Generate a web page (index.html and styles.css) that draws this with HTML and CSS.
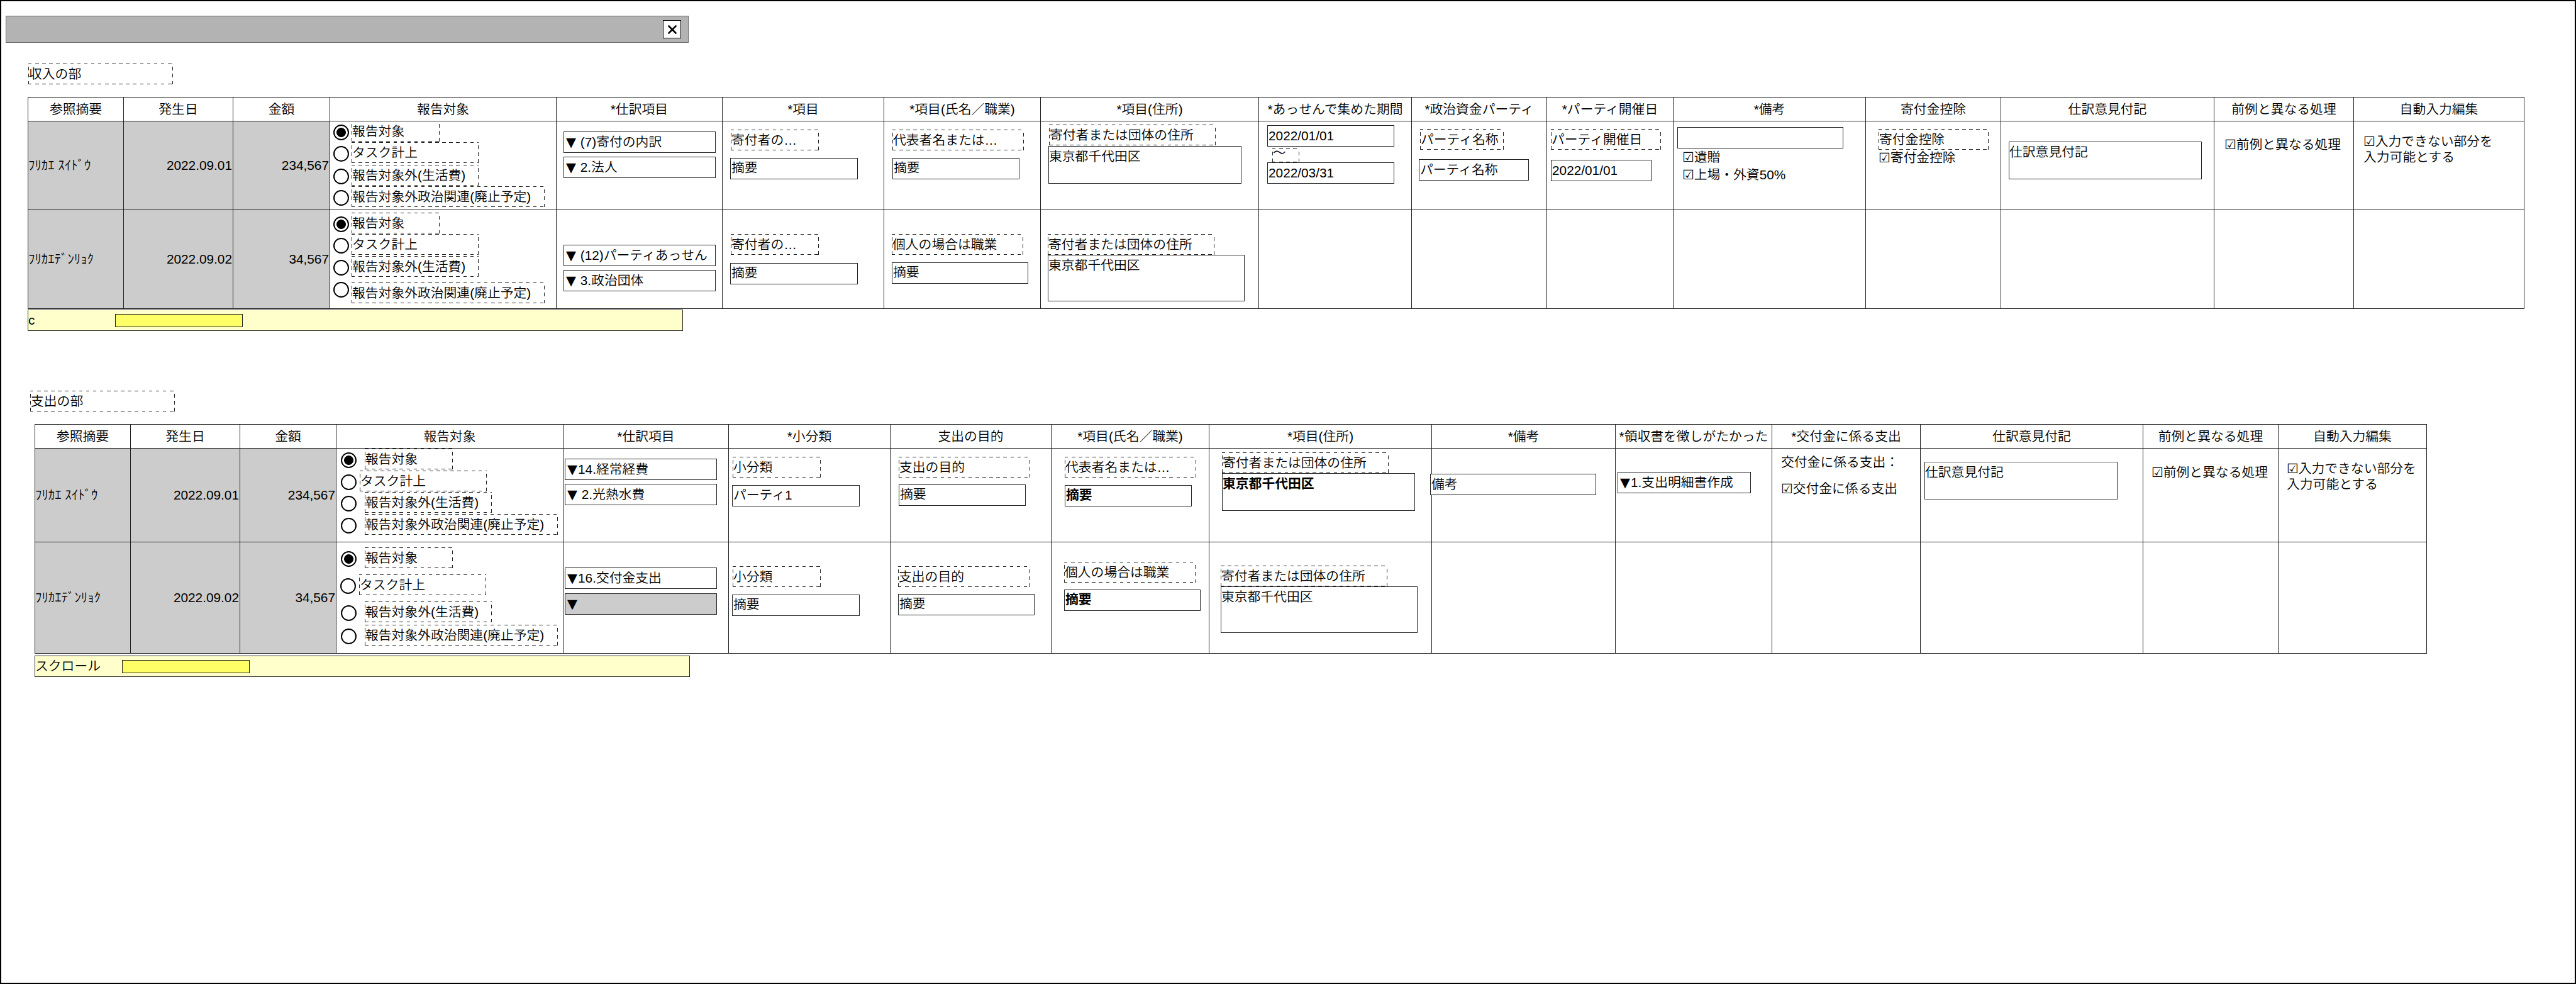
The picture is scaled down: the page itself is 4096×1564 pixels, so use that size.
FILE: index.html
```html
<!DOCTYPE html>
<html lang="ja">
<head>
<meta charset="utf-8">
<title>収支仕訳</title>
<link rel="stylesheet" href="styles.css">
</head>
<body>
<div class="window">
  <header class="titlebar">
    <button class="close" aria-label="閉じる"><svg viewBox="0 0 14 14"><path d="M1.5 1.5 12.5 12.5M12.5 1.5 1.5 12.5"/></svg></button>
  </header>

  <section class="section income">
    <h2 class="note title">収入の部</h2>
    <div class="grid">
      <div class="h">参照摘要</div><div class="h">発生日</div><div class="h">金額</div><div class="h">報告対象</div><div class="h">*仕訳項目</div><div class="h">*項目</div><div class="h">*項目(氏名／職業)</div><div class="h">*項目(住所)</div><div class="h">*あっせんで集めた期間</div><div class="h">*政治資金パーティ</div><div class="h">*パーティ開催日</div><div class="h">*備考</div><div class="h">寄付金控除</div><div class="h">仕訳意見付記</div><div class="h">前例と異なる処理</div><div class="h">自動入力編集</div>

      <div class="v">ﾌﾘｶｴ ｽｲﾄﾞｳ</div><div class="v num">2022.09.01</div><div class="v num">234,567</div>
      <div class="c options">
        <div class="option"><i class="radio on"></i><span class="note w140">報告対象</span></div>
        <div class="option"><i class="radio"></i><span class="note w202">タスク計上</span></div>
        <div class="option"><i class="radio"></i><span class="note w202">報告対象外(生活費)</span></div>
        <div class="option"><i class="radio"></i><span class="note w307">報告対象外政治関連(廃止予定)</span></div>
      </div>
      <div class="c account"><div class="box w241"><b class="sym">▼</b> (7)寄付の内訳</div><div class="box w241"><b class="sym">▼</b> 2.法人</div></div>
      <div class="c item"><div class="note w140">寄付者の…</div><div class="box up w203">摘要</div></div>
      <div class="c name"><div class="note w209">代表者名または…</div><div class="box up w202">摘要</div></div>
      <div class="c address"><div class="note w265">寄付者または団体の住所</div><div class="box area w307">東京都千代田区</div></div>
      <div class="c period"><div class="box w202">2022/01/01</div><div class="note tilde">～</div><div class="box w202">2022/03/31</div></div>
      <div class="c party"><div class="note w133">パーティ名称</div><div class="box w175">パーティ名称</div></div>
      <div class="c held"><div class="note w175">パーティ開催日</div><div class="box w160">2022/01/01</div></div>
      <div class="c remarks"><div class="box w264"></div><div class="check"><b class="sym">☑</b>遺贈</div><div class="check"><b class="sym">☑</b>上場・外資50%</div></div>
      <div class="c deduction"><div class="note w175">寄付金控除</div><div class="check"><b class="sym">☑</b>寄付金控除</div></div>
      <div class="c opinion"><div class="box area w307">仕訳意見付記</div></div>
      <div class="c precedent"><div class="check"><b class="sym">☑</b>前例と異なる処理</div></div>
      <div class="c auto"><div class="check two"><b class="sym">☑</b>入力できない部分を<br>入力可能とする</div></div>

      <div class="v">ﾌﾘｶｴﾃﾞﾝﾘｮｸ</div><div class="v num">2022.09.02</div><div class="v num">34,567</div>
      <div class="c options second">
        <div class="option"><i class="radio on"></i><span class="note w140">報告対象</span></div>
        <div class="option"><i class="radio"></i><span class="note w202">タスク計上</span></div>
        <div class="option"><i class="radio"></i><span class="note w202">報告対象外(生活費)</span></div>
        <div class="option"><i class="radio"></i><span class="note w307">報告対象外政治関連(廃止予定)</span></div>
      </div>
      <div class="c account second"><div class="box w241"><b class="sym">▼</b> (12)パーティあっせん</div><div class="box w241"><b class="sym">▼</b> 3.政治団体</div></div>
      <div class="c item second"><div class="note w140">寄付者の…</div><div class="box up w203">摘要</div></div>
      <div class="c name second"><div class="note w209">個人の場合は職業</div><div class="box up w217">摘要</div></div>
      <div class="c address second"><div class="note w265">寄付者または団体の住所</div><div class="box area tall w313">東京都千代田区</div></div>
      <div class="c"></div><div class="c"></div><div class="c"></div><div class="c"></div><div class="c"></div><div class="c"></div><div class="c"></div><div class="c"></div>
    </div>
    <div class="scroll"><span class="scroll-label">c</span><span class="thumb"></span></div>
  </section>

  <section class="section expense">
    <h2 class="note title">支出の部</h2>
    <div class="grid">
      <div class="h">参照摘要</div><div class="h">発生日</div><div class="h">金額</div><div class="h">報告対象</div><div class="h">*仕訳項目</div><div class="h">*小分類</div><div class="h">支出の目的</div><div class="h">*項目(氏名／職業)</div><div class="h">*項目(住所)</div><div class="h">*備考</div><div class="h">*領収書を徴しがたかった</div><div class="h">*交付金に係る支出</div><div class="h">仕訳意見付記</div><div class="h">前例と異なる処理</div><div class="h">自動入力編集</div>

      <div class="v">ﾌﾘｶｴ ｽｲﾄﾞｳ</div><div class="v num">2022.09.01</div><div class="v num">234,567</div>
      <div class="c options">
        <div class="option"><i class="radio on"></i><span class="note w140">報告対象</span></div>
        <div class="option near"><i class="radio"></i><span class="note w202">タスク計上</span></div>
        <div class="option"><i class="radio"></i><span class="note w202">報告対象外(生活費)</span></div>
        <div class="option"><i class="radio"></i><span class="note w307">報告対象外政治関連(廃止予定)</span></div>
      </div>
      <div class="c account"><div class="box w241"><b class="sym">▼</b>14.経常経費</div><div class="box w241"><b class="sym">▼</b> 2.光熱水費</div></div>
      <div class="c item"><div class="note w140">小分類</div><div class="box up w203">パーティ1</div></div>
      <div class="c purpose"><div class="note w209">支出の目的</div><div class="box up w202">摘要</div></div>
      <div class="c name"><div class="note w209">代表者名または…</div><div class="box up strong w202">摘要</div></div>
      <div class="c address"><div class="note w265">寄付者または団体の住所</div><div class="box area strong w307">東京都千代田区</div></div>
      <div class="c remarks"><div class="box w264">備考</div></div>
      <div class="c receipt"><div class="box w212"><b class="sym">▼</b>1.支出明細書作成</div></div>
      <div class="c grant"><div class="check">交付金に係る支出：</div><div class="check"><b class="sym">☑</b>交付金に係る支出</div></div>
      <div class="c opinion"><div class="box area w307">仕訳意見付記</div></div>
      <div class="c precedent"><div class="check"><b class="sym">☑</b>前例と異なる処理</div></div>
      <div class="c auto"><div class="check two"><b class="sym">☑</b>入力できない部分を<br>入力可能とする</div></div>

      <div class="v">ﾌﾘｶｴﾃﾞﾝﾘｮｸ</div><div class="v num">2022.09.02</div><div class="v num">34,567</div>
      <div class="c options second">
        <div class="option"><i class="radio on"></i><span class="note w140">報告対象</span></div>
        <div class="option near"><i class="radio"></i><span class="note w202">タスク計上</span></div>
        <div class="option"><i class="radio"></i><span class="note w202">報告対象外(生活費)</span></div>
        <div class="option"><i class="radio"></i><span class="note w307">報告対象外政治関連(廃止予定)</span></div>
      </div>
      <div class="c account second"><div class="box w241"><b class="sym">▼</b>16.交付金支出</div><div class="box disabled w241"><b class="sym">▼</b></div></div>
      <div class="c item second"><div class="note w140">小分類</div><div class="box up w203">摘要</div></div>
      <div class="c purpose second"><div class="note w209">支出の目的</div><div class="box up w217">摘要</div></div>
      <div class="c name second"><div class="note w209">個人の場合は職業</div><div class="box up strong w217">摘要</div></div>
      <div class="c address second"><div class="note w265">寄付者または団体の住所</div><div class="box area tall w313">東京都千代田区</div></div>
      <div class="c"></div><div class="c"></div><div class="c"></div><div class="c"></div><div class="c"></div><div class="c"></div>
    </div>
    <div class="scroll"><span class="scroll-label">スクロール</span><span class="thumb"></span></div>
  </section>
</div>
</body>
</html>
```
FILE: styles.css
```css
:root { --line: #222; }
* { box-sizing: border-box; }
body {
  margin: 0;
  background: #fff;
  color: #000;
  font: 350 20.8px/28px "Liberation Sans", "Noto Sans CJK JP", sans-serif;
}
.window {
  width: 4096px;
  height: 1564px;
  border: 2px solid #000;
  padding: 23px 0 0 7px;
  overflow: hidden;
}
.titlebar {
  width: 1086px;
  height: 43px;
  border: 1px solid #666;
  background: #b3b3b3;
  display: flex;
  justify-content: flex-end;
  align-items: center;
  padding-right: 11px;
}
.close {
  width: 29px;
  height: 29px;
  padding: 0;
  border: 1px solid #000;
  background: #fff;
  display: flex;
  align-items: center;
  justify-content: center;
}
.close svg { width: 14px; height: 14px; fill: none; stroke: #000; stroke-width: 2.6; stroke-linecap: round; }

.section { display: flex; flex-direction: column; align-items: flex-start; }
.income { padding: 33px 0 0 35px; }
.expense { padding: 95px 0 0 39px; }
.title { width: 230px; margin: 0 0 0 1px; font-size: inherit; font-weight: inherit; }
.expense .title { margin-left: 0; }

/* Dashed caption boxes */
.note {
  flex: none;
  height: 33px;
  padding-left: 1px;
  line-height: 33px;
  white-space: nowrap;
  background:
    repeating-linear-gradient(90deg, var(--line) 0 5.5px, transparent 5.5px 11.1px) 0 0 / 100% 1px no-repeat,
    repeating-linear-gradient(90deg, var(--line) 0 5.5px, transparent 5.5px 11.1px) 0 100% / 100% 1px no-repeat,
    repeating-linear-gradient(0deg, var(--line) 0 5.5px, transparent 5.5px 11.1px) 0 0 / 1px 100% no-repeat,
    repeating-linear-gradient(0deg, var(--line) 0 5.5px, transparent 5.5px 11.1px) 100% 0 / 1px 100% no-repeat;
}

/* Input boxes */
.box {
  flex: none;
  height: 34px;
  border: 1px solid var(--line);
  background: #fff;
  padding-left: 1px;
  line-height: 32px;
  white-space: pre;
}
.box.up { line-height: 29px; }
.box.area { height: 60px; line-height: 32px; padding-left: 0; }
.box.area.tall { height: 74px; }
.box.disabled { background: #ccc; }
.strong { font-weight: bold; }
.sym { font-family: "DejaVu Sans", sans-serif; font-weight: normal; line-height: 1; }
.box .sym { margin: 0 1px 0 2px; }

.w133 { width: 133px; }
.w140 { width: 140px; }
.w160 { width: 160px; }
.w175 { width: 175px; }
.w202 { width: 202px; }
.w203 { width: 203px; }
.w209 { width: 209px; }
.w212 { width: 212px; }
.w217 { width: 217px; }
.w241 { width: 242px; }
.w264 { width: 264px; }
.w265 { width: 265px; }
.w307 { width: 307px; }
.w313 { width: 313px; }

/* Journal tables */
.grid {
  display: grid;
  border: solid var(--line);
  border-width: 1px 0 0 1px;
}
.income .grid {
  margin-top: 20px;
  grid-template-columns: 152px 174px 154px 360px 264px 257px 249px 347px 243px 215px 201px 306px 215px 339px 222px 271px;
  grid-template-rows: 38px 141px 157px;
}
.expense .grid {
  margin: 20px 0 0 7px;
  grid-template-columns: 152px 174px 153px 361px 263px 257px 256px 251px 354px 292px 249px 236px 354px 215px 236px;
  grid-template-rows: 38px 149px 177px;
}
.h, .v, .c {
  min-width: 0;
  border: solid var(--line);
  border-width: 0 1px 1px 0;
  display: flex;
  white-space: nowrap;
}
.h { align-items: center; justify-content: center; }
.v { align-items: center; background: #ccc; padding-right: 1px; }
.num { justify-content: flex-end; }
.c { flex-direction: column; align-items: flex-start; }
.check { white-space: nowrap; height: 28px; line-height: 28px; }
.check.two { height: 50px; line-height: 25px; }

.option { display: flex; height: 33px; }
.radio {
  flex: none;
  width: 25px;
  height: 25px;
  margin-top: 6px;
  border: 2px solid #000;
  border-radius: 50%;
}
.radio.on { background: radial-gradient(circle, #000 7px, transparent 7.8px); }

/* Income table */
.income .options { padding-left: 5px; }
.income .option { gap: 4px; margin-top: 1px; }
.income .option:nth-child(1) { margin-top: -1px; }
.income .option:nth-child(3) { margin-top: 3px; }
.income .second .option:nth-child(1) { margin-top: 4px; }
.income .second .option:nth-child(3) { margin-top: 2px; }
.income .second .option:nth-child(4) { margin-top: 9px; }
.income .second .option:nth-child(4) .radio { margin-top: -1px; }
.income .account { padding: 16px 0 0 11px; gap: 6px; }
.income .account.second { padding-top: 55px; }
.income .item { padding: 13px 0 0 12px; gap: 12px; }
.income .item .note { margin-left: 1px; }
.income .item.second { padding-top: 38px; gap: 13px; }
.income .name { padding: 13px 0 0 13px; gap: 12px; }
.income .name.second { padding: 38px 0 0 12px; }
.income .address { padding: 5px 0 0 12px; gap: 1px; }
.income .address .note { margin-left: 1px; }
.income .address.second { padding: 38px 0 0 11px; gap: 0; }
.income .address.second .note { margin-left: 0; }
.period { padding: 6px 0 0 13px; }
.period .tilde { margin: 3px 0 0 8px; width: 43px; height: 22px; line-height: 14px; }
.party { padding: 12px 0 0 11px; gap: 15px; }
.party .note { margin-left: 2px; }
.held { padding: 12px 0 0 6px; gap: 16px; }
.income .remarks { padding: 9px 0 0 6px; }
.income .remarks .check { margin-left: 8px; }
.deduction { padding: 12px 0 0 20px; }
.deduction .check { margin-top: -1px; }
.income .opinion { padding: 32px 0 0 12px; }
.income .precedent { padding: 23px 0 0 16px; }
.income .auto { padding: 19px 0 0 15px; }

/* Expense table */
.expense .options { padding-left: 7px; }
.expense .option { gap: 13px; margin-top: 2px; }
.expense .option.near { gap: 5px; }
.expense .option:nth-child(1) { margin-top: 0; }
.expense .option:nth-child(3) { margin-top: 1px; }
.expense .second .option { margin-top: 10px; }
.expense .second .option:nth-child(1) { margin-top: 8px; }
.expense .second .option:nth-child(4) { margin-top: 4px; }
.expense .second .near { margin-left: -1px; }
.expense .account { padding: 16px 0 0 2px; gap: 6px; }
.expense .account.second { padding-top: 40px; gap: 7px; }
.expense .item { padding: 13px 0 0 5px; gap: 12px; }
.expense .item .note { margin-left: 1px; }
.expense .item.second { padding-top: 38px; }
.purpose { padding: 13px 0 0 13px; gap: 11px; }
.purpose.second { padding: 38px 0 0 12px; }
.expense .name { padding: 13px 0 0 21px; gap: 12px; }
.expense .name.second { padding: 31px 0 0 20px; gap: 11px; }
.expense .address { padding: 6px 0 0 20px; }
.expense .address.second { padding: 37px 0 0 18px; }
.expense .remarks { padding-top: 40px; }
.expense .remarks .box { margin-left: -3px; z-index: 1; }
.receipt { padding: 37px 0 0 3px; }
.grant { padding: 8px 0 0 14px; gap: 14px; }
.expense .opinion { padding: 21px 0 0 6px; }
.expense .opinion .box { border-top-color: #555; border-bottom-color: #555; }
.expense .precedent { padding: 24px 0 0 13px; }
.expense .auto { padding: 19px 0 0 13px; }

/* Horizontal scroll tracks */
.scroll {
  display: flex;
  align-items: center;
  width: 1042px;
  height: 34px;
  margin-top: 1px;
  border: 1px solid var(--line);
  background: #ffc;
}
.expense .scroll { margin: 3px 0 0 7px; }
.scroll-label { width: 138px; }
.thumb { width: 203px; height: 21px; border: 1px solid var(--line); background: #ff6; }
```
